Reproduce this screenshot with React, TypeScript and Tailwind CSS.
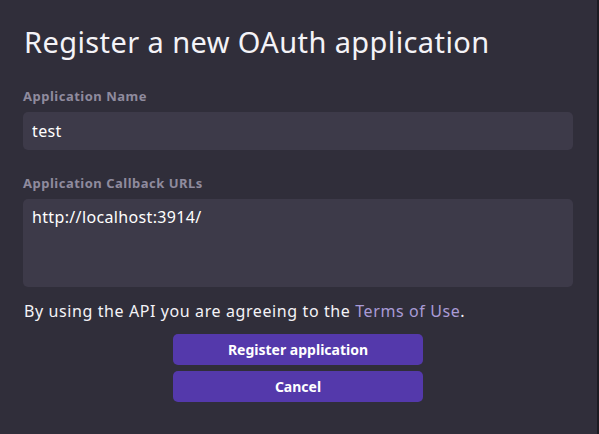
import React from 'react';

const font = { fontFamily: '"Noto Sans", "Open Sans", sans-serif' };

function Field({ label, children }: { label: string; children: React.ReactNode }) {
  return (
    <div className="flex flex-col">
      <label className="mb-[7px] text-[13px] font-bold leading-[18px] tracking-[0.5px] text-[#8f8b9e]">{label}</label>
      {children}
    </div>
  );
}

export default function App() {
  const [name, setName] = React.useState('test');
  const [urls, setUrls] = React.useState('http://localhost:3914/');

  return (
    <div className="flex h-[434px] w-[599px] bg-[#302e3a]" style={font}>
      <div className="flex min-w-0 flex-1 flex-col pl-[23px] pt-[24px]">
        <h1 className="pl-px text-[29px] font-normal leading-[36px] tracking-[0.4px] text-[#f4f3f7]">
          Register a new OAuth application
        </h1>

        <div className="mt-[27px] flex w-[550px] flex-col gap-[24px]">
          <Field label="Application Name">
            <input
              value={name}
              onChange={(e) => setName(e.target.value)}
              className="h-[38px] w-full rounded-[5px] bg-[#3d3a49] px-[9px] text-[16px] tracking-[0.35px] text-white outline-none"
            />
          </Field>
          <Field label="Application Callback URLs">
            <textarea
              value={urls}
              onChange={(e) => setUrls(e.target.value)}
              className="h-[88px] w-full resize-none rounded-[5px] bg-[#3d3a49] px-[9px] py-[7px] text-[16px] leading-[22px] tracking-[0.35px] text-white outline-none"
            />
          </Field>
        </div>

        <p className="mt-[13px] pl-px text-[16px] leading-[22px] tracking-[0.6px] text-[#f4f3f7]">
          By using the API you are agreeing to the{' '}
          <a href="#" className="text-[#a99bd6]">Terms of Use</a>.
        </p>

        <div className="mt-[12px] flex w-[550px] flex-col items-center gap-[6px]">
          <button className="h-[31px] w-[250px] rounded-[5px] bg-[#5439ab] text-[14px] font-bold text-white">
            Register application
          </button>
          <button className="h-[31px] w-[250px] rounded-[5px] bg-[#5439ab] text-[14px] font-bold text-white">
            Cancel
          </button>
        </div>
      </div>
      <div className="w-[2px] bg-[#1c1b22]" />
    </div>
  );
}
